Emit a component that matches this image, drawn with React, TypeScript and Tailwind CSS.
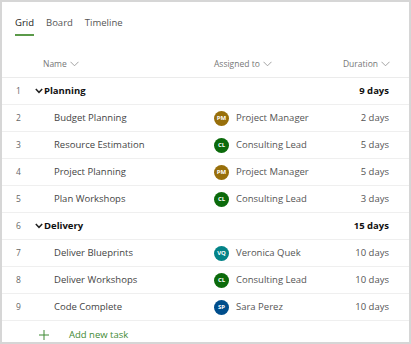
import React from 'react';

type Task = { n: number; name: string; who?: string; initials?: string; color?: string; days: string; group?: boolean };

const tasks: Task[] = [
  { n: 1, name: 'Planning', days: '9 days', group: true },
  { n: 2, name: 'Budget Planning', who: 'Project Manager', initials: 'PM', color: 'bg-[#986f0b]', days: '2 days' },
  { n: 3, name: 'Resource Estimation', who: 'Consulting Lead', initials: 'CL', color: 'bg-[#0b6a0b]', days: '5 days' },
  { n: 4, name: 'Project Planning', who: 'Project Manager', initials: 'PM', color: 'bg-[#986f0b]', days: '5 days' },
  { n: 5, name: 'Plan Workshops', who: 'Consulting Lead', initials: 'CL', color: 'bg-[#0b6a0b]', days: '3 days' },
  { n: 6, name: 'Delivery', days: '15 days', group: true },
  { n: 7, name: 'Deliver Blueprints', who: 'Veronica Quek', initials: 'VQ', color: 'bg-[#038387]', days: '10 days' },
  { n: 8, name: 'Deliver Workshops', who: 'Consulting Lead', initials: 'CL', color: 'bg-[#0b6a0b]', days: '10 days' },
  { n: 9, name: 'Code Complete', who: 'Sara Perez', initials: 'SP', color: 'bg-[#004e8c]', days: '10 days' },
];

const ThinChevron = () => (
  <svg width="9" height="6" viewBox="0 0 9 6" className="ml-[3px] text-[#999]">
    <path d="M0.5 0.8 L4.5 4.8 L8.5 0.8" fill="none" stroke="currentColor" strokeWidth="0.9" />
  </svg>
);

const BoldChevron = () => (
  <svg width="8" height="6" viewBox="0 0 8 6" className="mr-[1px]">
    <path d="M0.8 1 L4 4.3 L7.2 1" fill="none" stroke="#222" strokeWidth="1.5" />
  </svg>
);

const App: React.FC = () => {
  return (
    <div className="w-[411px] h-[344px] bg-white border-2 border-[#d6d6d6] overflow-hidden text-[#333]" style={{ fontFamily: '"Open Sans", "Noto Sans", sans-serif' }}>
      <div className="flex items-start gap-[12px] pl-[13px] pt-[13px] h-[49px] text-[9.5px]">
        <div className="flex flex-col items-stretch">
          <span className="text-[#222] font-medium leading-[15px]">Grid</span>
          <div className="h-[2px] bg-[#5b9a4a] mt-[4px]" />
        </div>
        <span className="text-[#555] leading-[15px]">Board</span>
        <span className="text-[#555] leading-[15px]">Timeline</span>
      </div>
      <div className="flex items-center h-[27px] border-b border-[#ebebeb] text-[8.5px] text-[#777]">
        <div className="w-[41px]" />
        <div className="w-[171px] flex items-center">Name<ThinChevron /></div>
        <div className="flex-1 flex items-center">Assigned to<ThinChevron /></div>
        <div className="flex items-center pr-[19px]">Duration<ThinChevron /></div>
      </div>
      {tasks.map((t) => (
        <div key={t.n} className="flex items-center h-[27px] border-b border-[#efefef] text-[9.5px]">
          <div className="w-[33px] text-center text-[8.5px] text-[#666]">{t.n}</div>
          {t.group ? (
            <>
              <div className="w-[179px] flex items-center font-bold text-[#111]"><BoldChevron />{t.name}</div>
              <div className="flex-1" />
              <div className="pr-[20px] font-bold text-[#111]">{t.days}</div>
            </>
          ) : (
            <>
              <div className="w-[179px] pl-[19px] text-[#444]">{t.name}</div>
              <div className="flex-1 flex items-center">
                <div className={`w-[15px] h-[15px] rounded-full ${t.color} text-white text-[6px] font-bold flex items-center justify-center mr-[7px]`}>{t.initials}</div>
                <span className="text-[#555]">{t.who}</span>
              </div>
              <div className="pr-[20px] text-[#555]">{t.days}</div>
            </>
          )}
        </div>
      ))}
      <div className="flex items-center h-[28px] text-[9.5px] text-[#3f8a35]">
        <div className="w-[47px] flex justify-end">
          <svg width="10" height="10" viewBox="0 0 10 10">
            <path d="M5 0 V10 M0 5 H10" stroke="#3f8a35" strokeWidth="1" />
          </svg>
        </div>
        <span className="ml-[20px]">Add new task</span>
      </div>
    </div>
  );
};

export default App;
